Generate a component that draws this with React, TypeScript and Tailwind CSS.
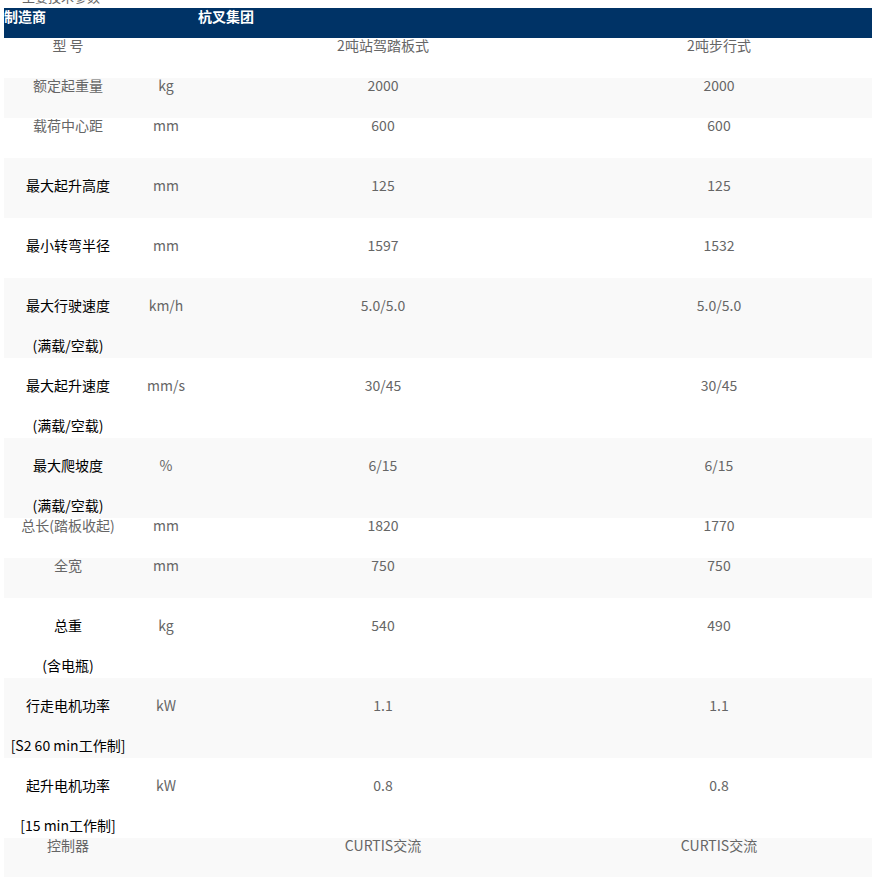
import React from "react";

type Row = {
  label: string[];
  bold?: boolean;
  unit: string;
  a: string;
  b: string;
  h: string;
};

const rows: Row[] = [
  { label: ["型 号"], unit: "", a: "2吨站驾踏板式", b: "2吨步行式", h: "h-[40px]" },
  { label: ["额定起重量"], unit: "kg", a: "2000", b: "2000", h: "h-[40px]" },
  { label: ["载荷中心距"], unit: "mm", a: "600", b: "600", h: "h-[40px]" },
  { label: ["最大起升高度"], bold: true, unit: "mm", a: "125", b: "125", h: "h-[60px]" },
  { label: ["最小转弯半径"], bold: true, unit: "mm", a: "1597", b: "1532", h: "h-[60px]" },
  { label: ["最大行驶速度", "(满载/空载)"], bold: true, unit: "km/h", a: "5.0/5.0", b: "5.0/5.0", h: "h-[80px]" },
  { label: ["最大起升速度", "(满载/空载)"], bold: true, unit: "mm/s", a: "30/45", b: "30/45", h: "h-[80px]" },
  { label: ["最大爬坡度", "(满载/空载)"], bold: true, unit: "%", a: "6/15", b: "6/15", h: "h-[80px]" },
  { label: ["总长(踏板收起)"], unit: "mm", a: "1820", b: "1770", h: "h-[40px]" },
  { label: ["全宽"], unit: "mm", a: "750", b: "750", h: "h-[40px]" },
  { label: ["总重", "(含电瓶)"], bold: true, unit: "kg", a: "540", b: "490", h: "h-[80px]" },
  { label: ["行走电机功率", "[S2 60 min工作制]"], bold: true, unit: "kW", a: "1.1", b: "1.1", h: "h-[80px]" },
  { label: ["起升电机功率", "[15 min工作制]"], bold: true, unit: "kW", a: "0.8", b: "0.8", h: "h-[80px]" },
  { label: ["控制器"], unit: "", a: "CURTIS交流", b: "CURTIS交流", h: "h-[40px]" },
];

export default function App() {
  return (
    <div
      className="w-[876px] h-[877px] overflow-hidden bg-white text-[14px] leading-4"
      style={{ fontFamily: '"Noto Sans CJK SC", "Noto Sans", sans-serif' }}
    >
      <div className="h-[8px] overflow-hidden pl-[22px]">
        <div className="-mt-[11px] text-[13px] text-[#666]">主要技术参数</div>
      </div>
      <div className="mx-[4px] w-[868px]">
        <div className="flex h-[30px] bg-[#003366] text-white font-bold">
          <div className="w-[194px]">制造商</div>
          <div>杭叉集团</div>
        </div>
        {rows.map((r, i) => (
          <div
            key={i}
            className={`grid grid-cols-[128px_68px_366px_306px] ${r.h} ${
              i % 2 === 1 ? "bg-[#f9f9f9]" : "bg-white"
            } ${r.bold ? "pt-[19px] leading-4" : "pt-[0px] leading-[14px]"} text-center text-[#666]`}
          >
            <div className={`flex flex-col whitespace-nowrap ${r.bold ? "gap-[24px]" : ""}`}>
              {r.label.map((l, j) => (
                <div key={j} className={r.bold ? "text-black" : ""}>
                  {l}
                </div>
              ))}
            </div>
            <div>{r.unit}</div>
            <div>{r.a}</div>
            <div>{r.b}</div>
          </div>
        ))}
      </div>
    </div>
  );
}
